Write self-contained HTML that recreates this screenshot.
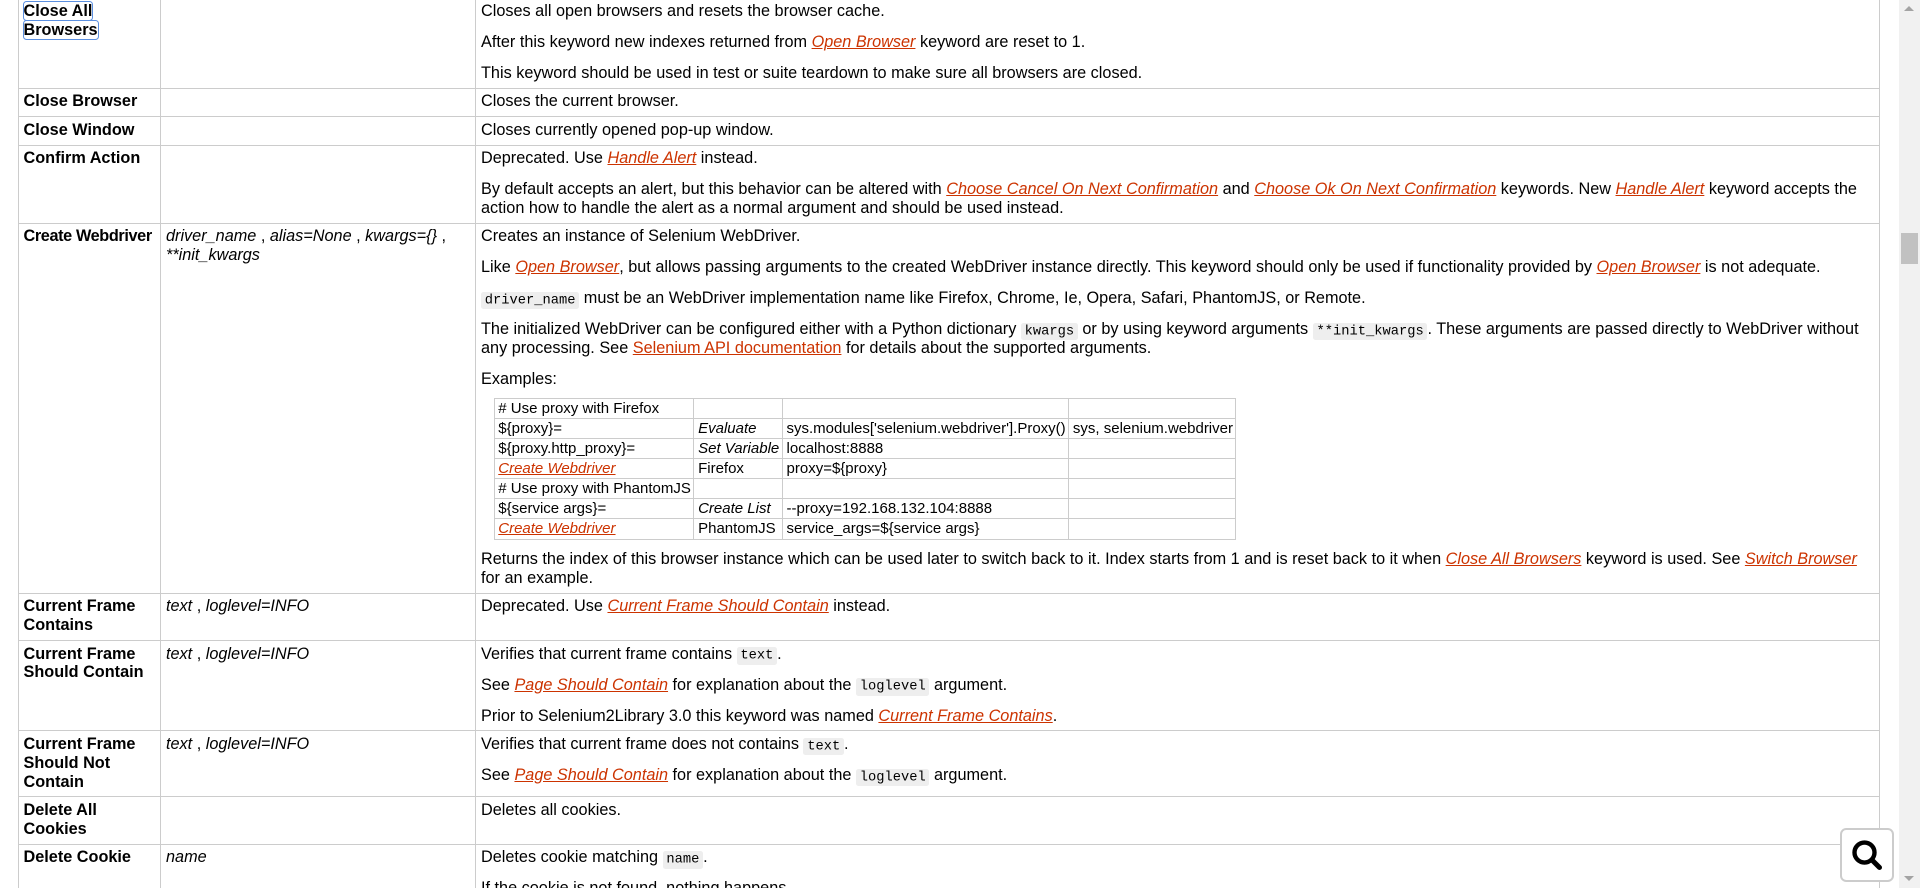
<!DOCTYPE html>
<html><head><meta charset="utf-8"><style>
html{zoom:1.25;overflow:hidden;height:710px}
body{margin:0;background:#fff;font-family:"Liberation Sans",Arial,sans-serif;font-size:13px;color:#000;overflow:hidden;width:1536px;height:710px;position:relative}
.wrap{position:absolute;left:14px;top:-2px;width:1490px;height:712px;overflow:hidden}
table.kw{border-collapse:collapse;width:1490px;table-layout:fixed}
table.kw>tbody>tr>td,table.kw>tbody>tr>th{border:1px solid #ccc;vertical-align:top;padding:3px 4px 4px;line-height:15px}
table.kw>tbody>tr>th{padding-right:1px}
th{text-align:left;font-weight:bold}
td.args{font-style:italic}
p{margin:0}
p+p{margin-top:9.6px}
p+table{margin-top:7.5px}
table+p{margin-top:8.5px}
a{color:#c30;font-style:italic;text-decoration:underline}
code{font-family:"Liberation Mono",monospace;font-size:11px;background:#eee;padding:1px 3px;border-radius:2px;line-height:12px}
table.ex{border-collapse:collapse;margin-left:10px;width:590px;font-size:12px}
table.ex td{border:1px solid #ccc;padding:0 2px 0 3px;line-height:15.3px;height:15.3px;white-space:nowrap}
table.ex td.i{font-style:italic}
.focus{outline:1.5px solid #5b8fe0;border-radius:2px}
.sb{position:absolute;left:1519px;top:0;width:17px;height:710px;background:#f1f1f1}
.thumb{position:absolute;left:2px;top:186px;width:13px;height:25px;background:#c1c1c1}
.up{position:absolute;left:4px;top:5px;width:0;height:0;border-left:4px solid transparent;border-right:4px solid transparent;border-bottom:4px solid #a3a3a3}
.dn{position:absolute;left:4px;bottom:5px;width:0;height:0;border-left:4px solid transparent;border-right:4px solid transparent;border-top:4px solid #a3a3a3}
.search{position:absolute;left:1472px;top:662px;width:40px;height:40px;background:#fff;border:2px solid #ccc;border-radius:5px}
</style></head><body>
<div class="wrap">
<table class="kw">
<colgroup><col style="width:114px"><col style="width:252px"><col></colgroup>
<tr><th><span class="focus">Close All</span><br><span class="focus">Browsers</span></th><td class="args"></td><td>
<p>Closes all open browsers and resets the browser cache.</p>
<p>After this keyword new indexes returned from <a>Open Browser</a> keyword are reset to 1.</p>
<p>This keyword should be used in test or suite teardown to make sure all browsers are closed.</p></td></tr>
<tr><th>Close Browser</th><td class="args"></td><td><p>Closes the current browser.</p></td></tr>
<tr><th>Close Window</th><td class="args"></td><td><p>Closes currently opened pop-up window.</p></td></tr>
<tr><th>Confirm Action</th><td class="args"></td><td>
<p>Deprecated. Use <a>Handle Alert</a> instead.</p>
<p>By default accepts an alert, but this behavior can be altered with <a>Choose Cancel On Next Confirmation</a> and <a>Choose Ok On Next Confirmation</a> keywords. New <a>Handle Alert</a> keyword accepts the action how to handle the alert as a normal argument and should be used instead.</p></td></tr>
<tr><th style="white-space:nowrap;letter-spacing:-0.3px">Create Webdriver</th><td class="args">driver_name<span style="font-style:normal"> ,</span> alias=None<span style="font-style:normal"> ,</span> kwargs={}<span style="font-style:normal"> ,</span> **init_kwargs</td><td>
<p>Creates an instance of Selenium WebDriver.</p>
<p>Like <a>Open Browser</a>, but allows passing arguments to the created WebDriver instance directly. This keyword should only be used if functionality provided by <a>Open Browser</a> is not adequate.</p>
<p><code>driver_name</code> must be an WebDriver implementation name like Firefox, Chrome, Ie, Opera, Safari, PhantomJS, or Remote.</p>
<p>The initialized WebDriver can be configured either with a Python dictionary <code>kwargs</code> or by using keyword arguments <code>**init_kwargs</code>. These arguments are passed directly to WebDriver without any processing. See <a style="font-style:normal">Selenium API documentation</a> for details about the supported arguments.</p>
<p>Examples:</p>
<table class="ex">
<tr><td># Use proxy with Firefox</td><td></td><td></td><td></td></tr>
<tr><td>${proxy}=</td><td class="i">Evaluate</td><td>sys.modules['selenium.webdriver'].Proxy()</td><td>sys, selenium.webdriver</td></tr>
<tr><td>${proxy.http_proxy}=</td><td class="i">Set Variable</td><td>localhost:8888</td><td></td></tr>
<tr><td><a>Create Webdriver</a></td><td>Firefox</td><td>proxy=${proxy}</td><td></td></tr>
<tr><td># Use proxy with PhantomJS</td><td></td><td></td><td></td></tr>
<tr><td>${service args}=</td><td class="i">Create List</td><td>--proxy=192.168.132.104:8888</td><td></td></tr>
<tr><td><a>Create Webdriver</a></td><td>PhantomJS</td><td>service_args=${service args}</td><td></td></tr>
</table>
<p>Returns the index of this browser instance which can be used later to switch back to it. Index starts from 1 and is reset back to it when <a>Close All Browsers</a> keyword is used. See <a>Switch Browser</a> for an example.</p></td></tr>
<tr><th>Current Frame Contains</th><td class="args">text<span style="font-style:normal"> ,</span> loglevel=INFO</td><td><p>Deprecated. Use <a>Current Frame Should Contain</a> instead.</p></td></tr>
<tr><th>Current Frame Should Contain</th><td class="args">text<span style="font-style:normal"> ,</span> loglevel=INFO</td><td>
<p>Verifies that current frame contains <code>text</code>.</p>
<p>See <a>Page Should Contain</a> for explanation about the <code>loglevel</code> argument.</p>
<p>Prior to Selenium2Library 3.0 this keyword was named <a>Current Frame Contains</a>.</p></td></tr>
<tr><th>Current Frame Should Not Contain</th><td class="args">text<span style="font-style:normal"> ,</span> loglevel=INFO</td><td>
<p>Verifies that current frame does not contains <code>text</code>.</p>
<p>See <a>Page Should Contain</a> for explanation about the <code>loglevel</code> argument.</p></td></tr>
<tr><th>Delete All Cookies</th><td class="args"></td><td><p>Deletes all cookies.</p></td></tr>
<tr><th>Delete Cookie</th><td class="args">name</td><td>
<p>Deletes cookie matching <code>name</code>.</p>
<p>If the cookie is not found, nothing happens.</p></td></tr>
</table>
</div>
<div class="sb"><div class="up"></div><div class="thumb"></div><div class="dn"></div></div>
<div class="search"><svg width="40" height="40" viewBox="0 0 40 40"><circle cx="18" cy="18" r="8" fill="none" stroke="#000" stroke-width="3.5"/><line x1="24" y1="24" x2="30" y2="30" stroke="#000" stroke-width="4" stroke-linecap="round"/></svg></div>
</body></html>
